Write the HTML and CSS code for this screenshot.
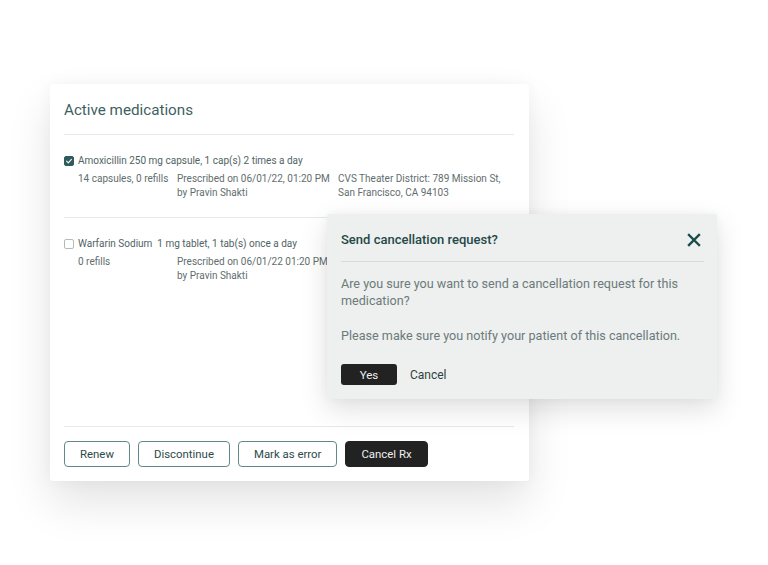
FILE: index.html
```html
<!DOCTYPE html>
<html>
<head>
<meta charset="utf-8">
<link rel="stylesheet" href="styles.css">
</head>
<body>
<div class="scene">
  <section class="card">
    <h2 class="card-title">Active medications</h2>
    <div class="med">
      <div class="med-main">
        <span class="check checked"><svg viewBox="0 0 10 10" width="10" height="10"><path d="M2.6 5.2 L4.3 6.8 L7.4 3.4" fill="none" stroke="#fff" stroke-width="1.1" stroke-linecap="round" stroke-linejoin="round"/></svg></span>
        <span>Amoxicillin 250 mg capsule, 1 cap(s) 2 times a day</span>
      </div>
      <div class="med-details">
        <div class="col col-qty">14 capsules, 0 refills</div>
        <div class="col col-rx">Prescribed on 06/01/22, 01:20 PM<br>by Pravin Shakti</div>
        <div class="col col-ph">CVS Theater District: 789 Mission St,<br>San Francisco, CA 94103</div>
      </div>
    </div>
    <div class="med med-last">
      <div class="med-main">
        <span class="check"></span>
        <span>Warfarin Sodium&nbsp; 1 mg tablet, 1 tab(s) once a day</span>
      </div>
      <div class="med-details">
        <div class="col col-qty">0 refills</div>
        <div class="col col-rx">Prescribed on 06/01/22 01:20 PM<br>by Pravin Shakti</div>
      </div>
    </div>
    <div class="actions">
      <button class="btn">Renew</button>
      <button class="btn">Discontinue</button>
      <button class="btn">Mark as error</button>
      <button class="btn btn-dark">Cancel Rx</button>
    </div>
  </section>

  <div class="dialog">
    <div class="dialog-head">
      <h3 class="dialog-title">Send cancellation request?</h3>
      <svg class="close" viewBox="0 0 14 14" width="14" height="14"><path d="M2 2 L12 12 M12 2 L2 12" stroke="#1d4b4b" stroke-width="2.4" stroke-linecap="square"/></svg>
    </div>
    <p class="dialog-text first">Are you sure you want to send a cancellation request for this medication?</p>
    <p class="dialog-text">Please make sure you notify your patient of this cancellation.</p>
    <div class="dialog-actions">
      <button class="dbtn-yes">Yes</button>
      <button class="dbtn-cancel">Cancel</button>
    </div>
  </div>
</div>
</body>
</html>
```

FILE: styles.css
```css
* { box-sizing: border-box; }
html, body { margin: 0; padding: 0; background: #fff; }
body {
  font-family: Roboto, "Liberation Sans", sans-serif;
  width: 768px;
  height: 565px;
  overflow: hidden;
}
.scene {
  position: relative;
  width: 768px;
  height: 565px;
  padding: 84px 0 0 50px;
}
.card {
  width: 479px;
  height: 397px;
  background: #fff;
  border-radius: 3px;
  box-shadow: 0 22px 45px rgba(0,0,0,0.11), 0 0 16px rgba(0,0,0,0.04);
  padding: 0 15px 0 14px;
  display: flex;
  flex-direction: column;
}
.card-title {
  margin: 0;
  padding: 17px 0 15px;
  font-size: 15.2px;
  line-height: 18px;
  font-weight: 400;
  color: #3e5f5f;
  border-bottom: 1px solid #e7eaea;
}
.med {
  padding: 19px 0 17px;
  border-bottom: 1px solid #e7eaea;
  font-size: 10px;
  line-height: 14px;
  color: #5f6e6e;
}
.med-last {
  flex: 1;
}
.med-main {
  display: flex;
  align-items: center;
  gap: 4px;
  color: #506464;
}
.check {
  width: 10px;
  height: 10px;
  border: 1px solid #b4baba;
  border-radius: 2px;
  background: #fff;
  display: inline-flex;
  flex: none;
}
.check.checked {
  background: #2f5b5c;
  border-color: #2f5b5c;
}
.check svg { margin: -1px; }
.med-details {
  display: flex;
  padding-left: 14px;
  margin-top: 4px;
}
.col-qty { width: 99px; }
.col-rx { width: 161px; }
.actions {
  display: flex;
  gap: 8px;
  padding: 14px 0 14px;
}
.btn {
  height: 26px;
  padding: 0 15px;
  background: #fff;
  border: 1px solid #628888;
  border-radius: 4px;
  font-family: inherit;
  font-size: 11.4px;
  color: #2d4a4a;
}
.btn-dark {
  background: #222;
  border-color: #222;
  color: #eee;
}
.dialog {
  position: absolute;
  left: 327px;
  top: 214px;
  width: 390px;
  height: 185px;
  background: #edf0ef;
  border-radius: 2px;
  box-shadow: 0 10px 28px rgba(0,0,0,0.13), 0 0 8px rgba(0,0,0,0.04);
  padding: 0 13px 14px 14px;
}
.dialog-head {
  display: flex;
  align-items: center;
  justify-content: space-between;
  padding: 18px 0 13px;
  border-bottom: 1px solid #d6dcdb;
}
.dialog-title {
  margin: 0;
  font-size: 13px;
  line-height: 16px;
  font-weight: 500;
  color: #254848;
}
.close { margin-right: 3px; }
.dialog-text {
  margin: 0;
  font-size: 12.6px;
  line-height: 17px;
  color: #6c7a7a;
}
.dialog-text.first { margin-top: 13px; margin-bottom: 18px; }
.dialog-actions {
  display: flex;
  align-items: center;
  gap: 13px;
  margin-top: 20px;
}
.dbtn-yes {
  width: 56px;
  height: 21px;
  background: #222;
  border: 0;
  border-radius: 3px;
  color: #eee;
  font-family: inherit;
  font-size: 11.5px;
}
.dbtn-cancel {
  background: none;
  border: 0;
  padding: 0;
  font-family: inherit;
  font-size: 12px;
  font-weight: 400;
  color: #2f3e3e;
}
```
